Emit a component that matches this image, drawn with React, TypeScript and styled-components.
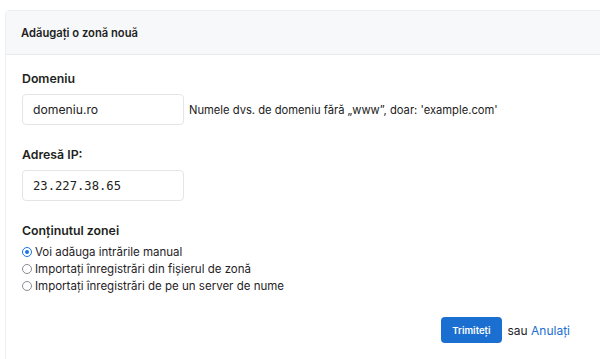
import React, { useState } from 'react'
import styled, { createGlobalStyle } from 'styled-components'

const GlobalStyle = createGlobalStyle`
  html, body {
    margin: 0;
    padding: 0;
    background: #ffffff;
    overflow: hidden;
  }
  body {
    font-family: Inter, "Noto Sans", sans-serif;
    color: #1f2328;
  }
`

const Page = styled.div`
  padding: 10px 0 0 5px;
  height: 349px;
  overflow: hidden;
`

const Card = styled.div`
  width: 640px;
  height: 400px;
  border: 1px solid #eceef1;
  border-radius: 4px;
  background: #fff;
`

const CardHeader = styled.div`
  height: 43px;
  display: flex;
  align-items: center;
  padding: 0 15px;
  background: #f7f8fa;
  border-bottom: 1px solid #e8eaee;
  font-size: 11.2px;
  font-weight: 600;
  color: #222;
`

const CardBody = styled.div`
  padding: 16px 16px 0 16px;
`

const Field = styled.div`
  margin-bottom: 22px;
`

const Label = styled.div<{ $tight?: boolean }>`
  font-size: 12.3px;
  font-weight: 600;
  color: #1d1f22;
  margin-bottom: ${({ $tight }) => ($tight ? '6px' : '8px')};
`

const InputRow = styled.div`
  display: flex;
  align-items: center;
  gap: 5px;
`

const TextInput = styled.input<{ $mono?: boolean }>`
  width: 162px;
  height: 31px;
  box-sizing: border-box;
  border: 1px solid #e3e5e9;
  border-radius: 4px;
  padding: 0 10px;
  font-family: ${({ $mono }) => ($mono ? '"DejaVu Sans Mono", monospace' : 'Inter, "Noto Sans", sans-serif')};
  font-size: 12.2px;
  color: #222;
  outline: none;
`

const Hint = styled.span`
  font-size: 11.2px;
  color: #222;
`

const RadioList = styled.div`
  display: flex;
  flex-direction: column;
  gap: 1px;
`

const RadioRow = styled.label`
  display: flex;
  align-items: center;
  gap: 3px;
  font-size: 11.5px;
  height: 16px;
  color: #1f2328;
`

const Dot = styled.span<{ $on: boolean }>`
  width: 10px;
  height: 10px;
  box-sizing: border-box;
  border-radius: 50%;
  border: 1px solid ${({ $on }) => ($on ? '#1a73e8' : '#8a8d92')};
  display: flex;
  align-items: center;
  justify-content: center;
  &::after {
    content: '';
    width: 4px;
    height: 4px;
    border-radius: 50%;
    background: ${({ $on }) => ($on ? '#1a73e8' : 'transparent')};
  }
`

const Actions = styled.div`
  display: flex;
  align-items: center;
  justify-content: flex-end;
  gap: 6px;
  width: 548px;
  margin-top: 23px;
  font-size: 12px;
`

const SubmitButton = styled.button`
  height: 26px;
  padding: 0 11px;
  border: none;
  border-radius: 4px;
  background: #1a6fd0;
  color: #fff;
  font-family: Inter, "Noto Sans", sans-serif;
  font-size: 9.6px;
  font-weight: 600;
`

const CancelLink = styled.a`
  color: #1a6fd0;
  text-decoration: none;
`

const options = [
  'Voi adăuga intrările manual',
  'Importați înregistrări din fișierul de zonă',
  'Importați înregistrări de pe un server de nume',
]

export default function App() {
  const [choice, setChoice] = useState(0)
  return (
    <>
      <GlobalStyle />
      <Page>
        <Card>
          <CardHeader>Adăugați o zonă nouă</CardHeader>
          <CardBody>
            <Field>
              <Label>Domeniu</Label>
              <InputRow>
                <TextInput defaultValue="domeniu.ro" />
                <Hint>Numele dvs. de domeniu fără „www”, doar: 'example.com'</Hint>
              </InputRow>
            </Field>
            <Field>
              <Label>Adresă IP:</Label>
              <InputRow>
                <TextInput $mono defaultValue="23.227.38.65" />
              </InputRow>
            </Field>
            <Label $tight>Conținutul zonei</Label>
            <RadioList>
              {options.map((o, i) => (
                <RadioRow key={o} onClick={() => setChoice(i)}>
                  <Dot $on={choice === i} />
                  {o}
                </RadioRow>
              ))}
            </RadioList>
            <Actions>
              <SubmitButton>Trimiteți</SubmitButton>
              <span>
                sau <CancelLink href="#">Anulați</CancelLink>
              </span>
            </Actions>
          </CardBody>
        </Card>
      </Page>
    </>
  )
}
